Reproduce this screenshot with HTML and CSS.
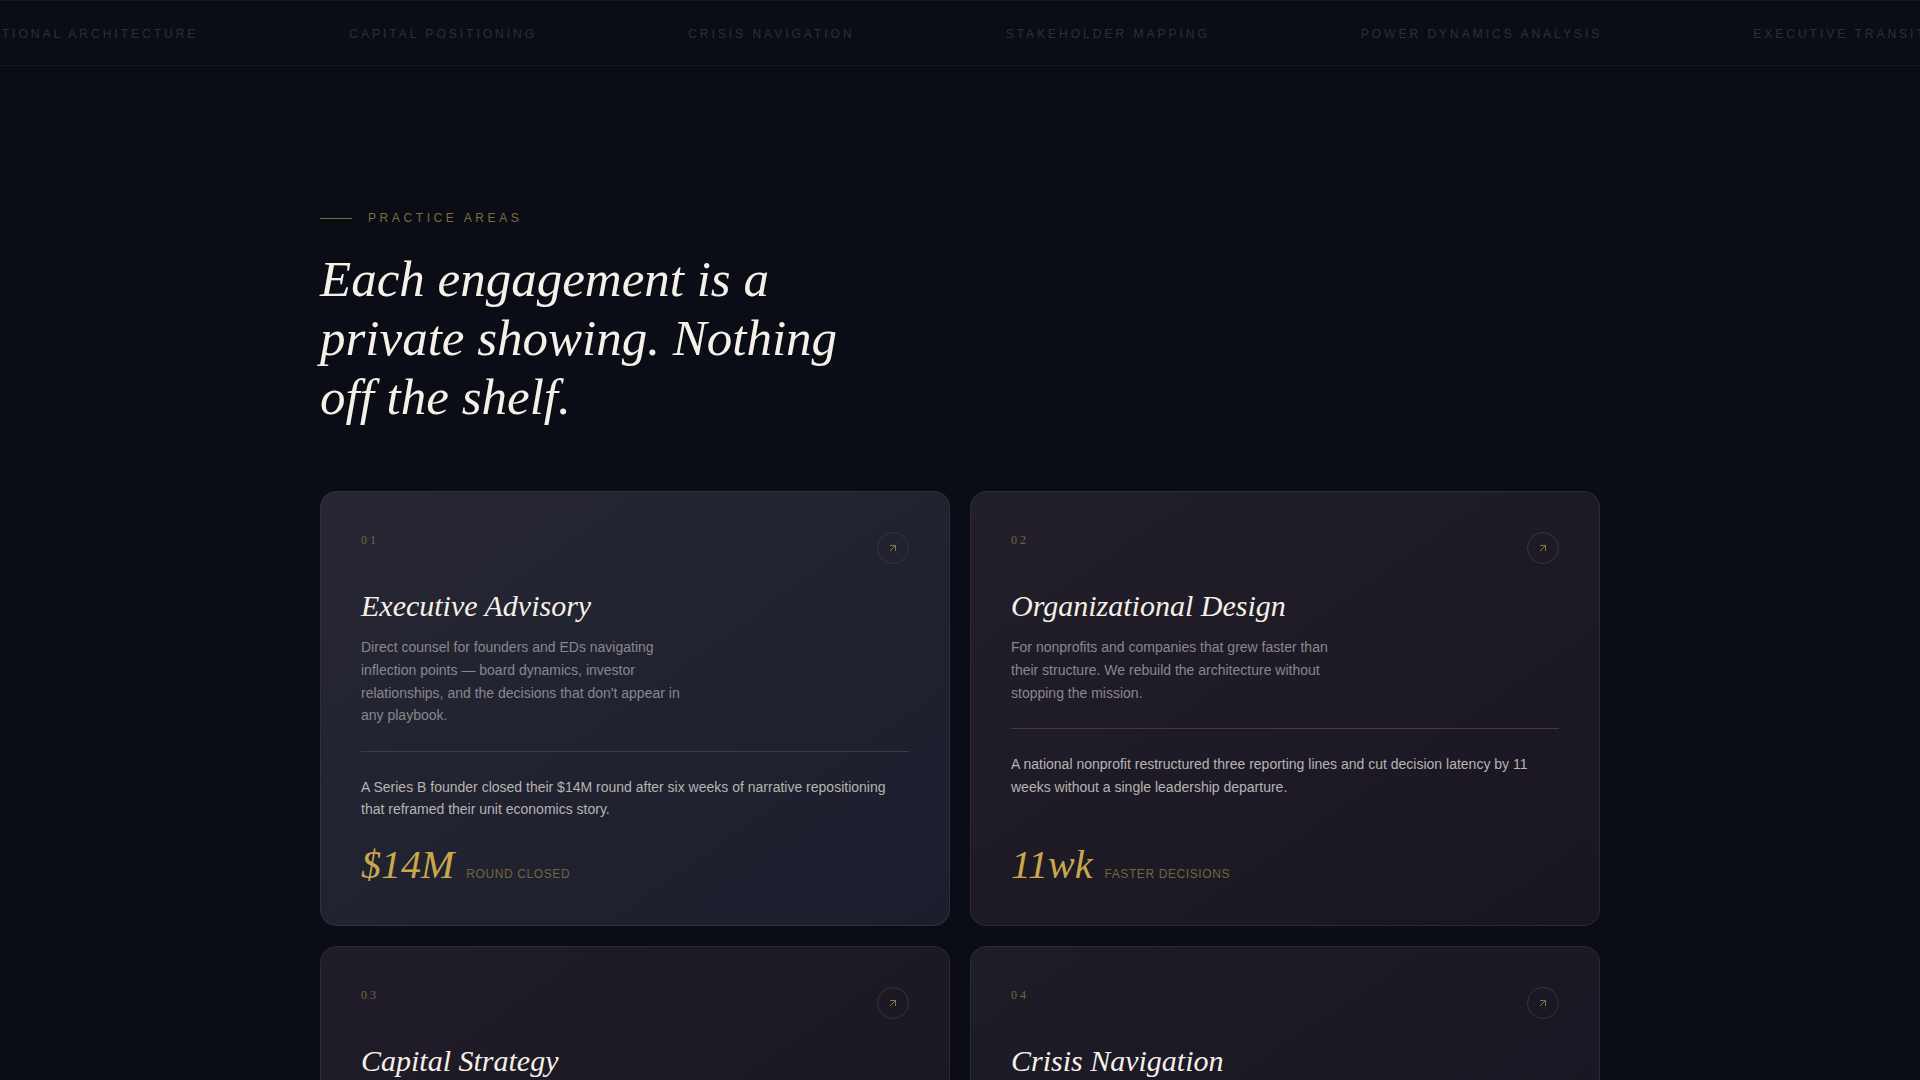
FILE: index.html
```html
<!DOCTYPE html>
<html lang="en">
<head>
<meta charset="utf-8">
<meta name="viewport" content="width=device-width, initial-scale=1">
<title>Practice Areas</title>
<link rel="stylesheet" href="styles.css">
</head>
<body>
<div class="ticker">
  <ul class="ticker-track">
    <li>Organizational Architecture</li>
    <li>Capital Positioning</li>
    <li>Crisis Navigation</li>
    <li>Stakeholder Mapping</li>
    <li>Power Dynamics Analysis</li>
    <li>Executive Transitions</li>
  </ul>
</div>
<main class="practice">
  <header class="practice-head">
    <p class="eyebrow">Practice Areas</p>
    <h2 class="headline">Each engagement is a private showing. Nothing off the shelf.</h2>
  </header>
  <div class="cards">
    <article class="card card-lead">
      <div class="card-top">
        <span class="card-number">01</span>
        <a class="card-link" href="#" aria-label="Executive Advisory"><svg class="arrow" viewBox="0 0 10 10" aria-hidden="true"><path d="M2 8l5.500-5.500M2 2.500h5.500V8"/></svg></a>
      </div>
      <h3 class="card-title">Executive Advisory</h3>
      <p class="card-text">Direct counsel for founders and EDs navigating inflection points — board dynamics, investor relationships, and the decisions that don't appear in any playbook.</p>
      <p class="card-outcome">A Series B founder closed their $14M round after six weeks of narrative repositioning that reframed their unit economics story.</p>
      <p class="metric"><span class="metric-value">$14M</span><span class="metric-label">Round closed</span></p>
    </article>
    <article class="card card-plum">
      <div class="card-top">
        <span class="card-number">02</span>
        <a class="card-link" href="#" aria-label="Organizational Design"><svg class="arrow" viewBox="0 0 10 10" aria-hidden="true"><path d="M2 8l5.500-5.500M2 2.500h5.500V8"/></svg></a>
      </div>
      <h3 class="card-title">Organizational Design</h3>
      <p class="card-text">For nonprofits and companies that grew faster than their structure. We rebuild the architecture without stopping the mission.</p>
      <p class="card-outcome">A national nonprofit restructured three reporting lines and cut decision latency by 11 weeks without a single leadership departure.</p>
      <p class="metric"><span class="metric-value">11wk</span><span class="metric-label">Faster decisions</span></p>
    </article>
    <article class="card card-wine">
      <div class="card-top">
        <span class="card-number">03</span>
        <a class="card-link" href="#" aria-label="Capital Strategy"><svg class="arrow" viewBox="0 0 10 10" aria-hidden="true"><path d="M2 8l5.500-5.500M2 2.500h5.500V8"/></svg></a>
      </div>
      <h3 class="card-title">Capital Strategy</h3>
    </article>
    <article class="card card-dusk">
      <div class="card-top">
        <span class="card-number">04</span>
        <a class="card-link" href="#" aria-label="Crisis Navigation"><svg class="arrow" viewBox="0 0 10 10" aria-hidden="true"><path d="M2 8l5.500-5.500M2 2.500h5.500V8"/></svg></a>
      </div>
      <h3 class="card-title">Crisis Navigation</h3>
    </article>
  </div>
</main>
</body>
</html>
```
FILE: styles.css
```css
:root {
  --ink: #0b0d16;
  --ivory: #f5f0e8;
  --gold: #c9a84c;
  --sans: "Liberation Sans", Arial, sans-serif;
  --serif: "Liberation Serif", "Times New Roman", serif;
}

* { box-sizing: border-box; }

body {
  margin: 0;
  background: var(--ink);
  color: var(--ivory);
  font-family: var(--sans);
}

h2, h3, p, ul { margin: 0; padding: 0; }

.ticker {
  overflow: hidden;
  padding: 24px 0 22px;
  border-top: 1px solid #15171f;
  border-bottom: 1px solid #15171f;
}

.ticker-track {
  display: flex;
  gap: 151px;
  width: max-content;
  list-style: none;
  transform: translateX(-84px);
}

.ticker-track li {
  font-size: 12px;
  line-height: 18px;
  letter-spacing: 3px;
  text-transform: uppercase;
  white-space: nowrap;
  color: #322f2b;
}

.practice {
  max-width: 1328px;
  margin: 0 auto;
  padding: 144px 24px;
}

.practice-head {
  max-width: 560px;
  margin-bottom: 64px;
}

.eyebrow {
  display: flex;
  align-items: center;
  gap: 16px;
  margin-bottom: 24px;
  font-size: 12px;
  line-height: 16px;
  letter-spacing: 0.3em;
  text-transform: uppercase;
  color: #7d6c3d;
}

.eyebrow::before {
  content: "";
  width: 32px;
  height: 1px;
  background: #7d6c3d;
}

.headline {
  font: italic 400 51px/59px var(--serif);
}

.cards {
  display: grid;
  grid-template-columns: 1fr 1fr;
  grid-auto-rows: 1fr;
  gap: 20px;
}

.card {
  display: flex;
  flex-direction: column;
  padding: 40px;
  border: 1px solid #2b2a36;
  border-radius: 16px;
}

.card-lead {
  background: linear-gradient(145deg, #272733, #1b1e2d);
  border-color: #30313d;
}

.card-plum { background: linear-gradient(145deg, #221f2b, #191622); }

.card-wine { background: linear-gradient(145deg, #201d29, #181520); }

.card-dusk { background: linear-gradient(145deg, #1d1c27, #161420); }

.card-top {
  display: flex;
  justify-content: space-between;
  align-items: flex-start;
  margin-bottom: 24px;
}

.card-number {
  font: 12px/16px var(--serif);
  letter-spacing: 3px;
  color: #75663f;
}

.card-link {
  display: grid;
  place-items: center;
  width: 32px;
  height: 32px;
  border: 1px solid #393534;
  border-radius: 50%;
}

.arrow {
  width: 10px;
  height: 10px;
  fill: none;
  stroke: #857346;
  stroke-width: 1;
}

.card-title {
  margin-bottom: 12px;
  font: italic 400 30px/36px var(--serif);
}

.card-text {
  max-width: 320px;
  margin-bottom: 24px;
  font-size: 14px;
  line-height: 1.625;
  color: #89888c;
}

.card-outcome {
  padding-top: 24px;
  margin-bottom: 24px;
  border-top: 1px solid #413c38;
  font-size: 14px;
  line-height: 1.6;
  color: #b7b4b2;
}

.metric {
  display: flex;
  align-items: baseline;
  gap: 12px;
  margin-top: auto;
}

.metric-value {
  font: italic 400 40px/40px var(--serif);
  color: var(--gold);
}

.metric-label {
  font-size: 12px;
  line-height: 16px;
  letter-spacing: 0.05em;
  text-transform: uppercase;
  color: #75643f;
}

@media (max-width: 800px) {
  .cards { grid-template-columns: 1fr; }
}
```
